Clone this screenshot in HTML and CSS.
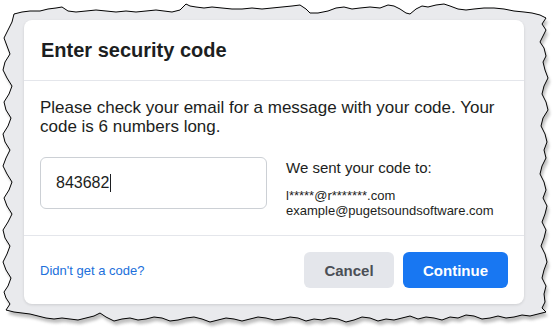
FILE: index.html
```html
<!DOCTYPE html>
<html lang="en">
<head>
<meta charset="utf-8">
<title>Enter security code</title>
<link rel="stylesheet" href="styles.css">
</head>
<body>
<div class="page">
  <svg class="torn" width="556" height="334" viewBox="0 0 556 334" aria-hidden="true">
    <defs>
      <filter id="blur" x="-5%" y="-5%" width="110%" height="110%">
        <feGaussianBlur stdDeviation="1.6"/>
      </filter>
      <path id="edge" d="M14,14 L22,12 30,11 40,11 48,9 56,8 62,7 68,11 76,12 86,11 96,10 106,11 116,12 126,11 136,12 146,11 156,10 164,11 172,12 180,10 186,4 190,6 196,7 204,8 212,7 222,8 232,9 242,9 252,8 262,9 272,8 282,7 292,6 300,5 306,9 310,13 318,13 328,11 336,8 344,7 352,9 360,8 370,7 380,8 388,5 394,6 400,9 406,13 410,14 416,9 422,6 428,7 436,5 444,4 450,6 458,9 466,10 474,9 484,8 494,8 504,9 514,11 524,12 532,13 540,15 546,18 542,24 546,30 543,36 540,42 544,48 546,56 543,62 545,70 548,78 544,86 542,94 546,102 548,110 543,118 541,126 545,134 547,142 544,150 546,158 542,166 540,174 544,182 546,190 543,198 547,206 545,214 542,222 546,230 544,238 541,246 545,254 547,262 544,270 542,278 546,286 544,294 545,302 542,308 546,312 538,314 530,316 522,315 514,317 506,318 498,316 490,318 482,319 474,316 466,315 458,318 450,317 442,320 434,318 426,317 418,319 410,316 402,318 394,320 386,319 378,321 370,318 362,317 354,320 346,322 338,319 330,318 322,320 314,319 306,321 298,318 290,317 282,319 274,320 266,318 258,317 250,319 242,321 234,319 226,318 218,320 210,322 202,319 194,317 186,318 178,320 170,321 162,318 154,317 146,319 138,320 130,318 122,319 114,321 106,317 100,313 94,316 86,318 78,320 70,319 62,318 54,319 46,318 38,316 30,314 22,313 14,312 6,310 10,304 6,298 4,292 8,286 11,278 6,270 3,262 7,254 10,246 5,238 3,230 8,222 12,214 7,206 4,198 9,190 12,182 7,174 3,166 6,158 10,150 5,142 3,134 8,126 11,118 6,110 4,102 9,94 12,86 7,78 3,70 5,62 10,54 7,46 4,38 8,30 12,22 Z"/>
    </defs>
    <use href="#edge" transform="translate(2,4)" fill="#8a8a8a" opacity="0.55" filter="url(#blur)"/>
    <use href="#edge" fill="#e9eaed" stroke="#000" stroke-width="1"/>
  </svg>

  <div class="card">
    <div class="card-header">
      <h1 class="title">Enter security code</h1>
    </div>
    <div class="card-body">
      <p class="intro">Please check your email for a message with your code. Your code is 6 numbers long.</p>
      <div class="code-row">
        <div class="code-input"><span class="code-value">843682</span><span class="caret"></span></div>
        <div class="sent-info">
          <div class="sent-label">We sent your code to:</div>
          <div class="sent-addr">l*****@r*******.com</div>
          <div class="sent-addr">example@pugetsoundsoftware.com</div>
        </div>
      </div>
    </div>
    <div class="card-footer">
      <a class="help-link" href="#">Didn't get a code?</a>
      <div class="actions">
        <button class="btn btn-cancel" type="button">Cancel</button>
        <button class="btn btn-continue" type="button">Continue</button>
      </div>
    </div>
  </div>
</div>
</body>
</html>
```

FILE: styles.css
```css
* { box-sizing: border-box; }

html, body {
  margin: 0;
  padding: 0;
  background: #ffffff;
}

body {
  font-family: "Liberation Sans", Arial, sans-serif;
  color: #1c1e21;
}

.page {
  position: relative;
  width: 556px;
  height: 334px;
  padding: 20px 0 0 24px;
  overflow: hidden;
}

.torn {
  position: absolute;
  left: 0;
  top: 0;
  z-index: 0;
}

.card {
  position: relative;
  z-index: 1;
  width: 500px;
  height: 284px;
  background: #ffffff;
  border-radius: 8px;
  box-shadow: 0 1px 3px rgba(0, 0, 0, 0.12);
  display: flex;
  flex-direction: column;
}

.card-header {
  height: 61px;
  padding: 0 16px 0 17px;
  display: flex;
  align-items: center;
  border-bottom: 1px solid #e4e6eb;
}

.title {
  margin: 0;
  font-size: 20px;
  line-height: 24px;
  font-weight: 700;
  color: #1c1e21;
}

.card-body {
  padding: 17px 16px 17px;
  border-bottom: 1px solid #e4e6eb;
}

.intro {
  margin: 0 0 21px;
  font-size: 17px;
  line-height: 19px;
  color: #1c1e21;
}

.code-row {
  display: flex;
  align-items: flex-start;
  gap: 19px;
}

.code-input {
  width: 227px;
  height: 52px;
  border: 1px solid #ccd0d5;
  border-radius: 6px;
  padding: 0 15px;
  display: flex;
  align-items: center;
  font-size: 16px;
  color: #1c1e21;
}

.caret {
  display: inline-block;
  width: 1px;
  height: 18px;
  margin-left: 1px;
  background: #1c1e21;
}

.sent-info {
  padding-top: 2px;
}

.sent-label {
  font-size: 15px;
  line-height: 17px;
  color: #1c1e21;
  margin-bottom: 12px;
}

.sent-addr {
  font-size: 13px;
  line-height: 15px;
  color: #1c1e21;
}

.card-footer {
  flex: 1;
  padding: 0 16px;
  display: flex;
  align-items: center;
  justify-content: space-between;
}

.help-link {
  font-size: 13px;
  color: #216fdb;
  text-decoration: none;
}

.actions {
  display: flex;
  gap: 9px;
}

.btn {
  height: 36px;
  padding: 0 20px;
  border: none;
  border-radius: 6px;
  font-family: "Liberation Sans", Arial, sans-serif;
  font-size: 15px;
  font-weight: 700;
  cursor: pointer;
}

.btn-cancel {
  width: 90px;
  background: #e4e6eb;
  color: #4b4f56;
}

.btn-continue {
  width: 105px;
  background: #1877f2;
  color: #ffffff;
}
```
